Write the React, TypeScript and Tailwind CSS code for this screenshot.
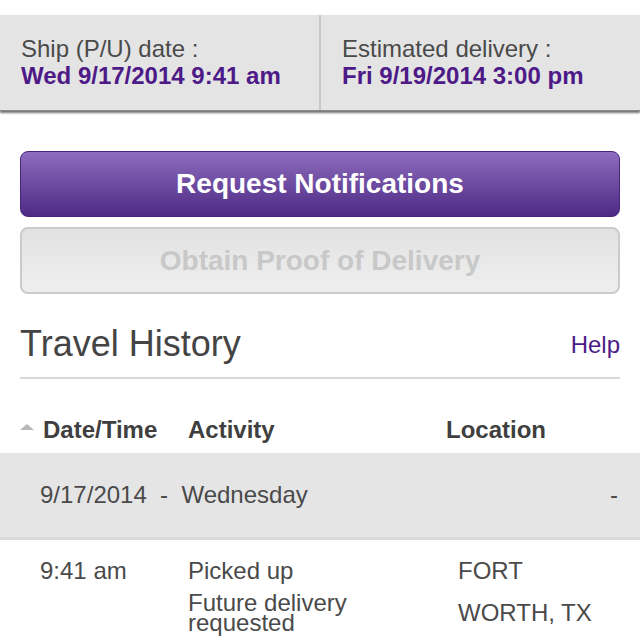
import React from "react";

export default function App() {
  return (
    <div
      className="w-[640px] h-[640px] overflow-hidden bg-white text-[#4a4a4a]"
      style={{ fontFamily: '"Liberation Sans", Arial, sans-serif' }}
    >
      <div className="h-[15px]" />
      <div className="flex h-[96px] bg-[#e4e4e4] shadow-[0_2px_2px_rgba(0,0,0,0.55)] border-b border-[#8a8a8a]">
        <div className="w-[321px] pl-[21px] pt-[20px] border-r-2 border-[#c9c9c9]">
          <div className="text-[24px] leading-[27px] text-[#4a4a4a]">Ship (P/U) date :</div>
          <div className="text-[24px] leading-[27px] font-bold text-[#4d1a87]">Wed 9/17/2014 9:41 am</div>
        </div>
        <div className="flex-1 pl-[21px] pt-[20px]">
          <div className="text-[24px] leading-[27px] text-[#4a4a4a]">Estimated delivery :</div>
          <div className="text-[24px] leading-[27px] font-bold text-[#4d1a87]">Fri 9/19/2014 3:00 pm</div>
        </div>
      </div>

      <div className="px-[20px] pt-[40px]">
        <button className="w-full h-[66px] rounded-[8px] border border-[#4a2680] bg-gradient-to-b from-[#8e6cbd] to-[#4f2a85] text-white font-bold text-[28px] flex items-center justify-center">
          Request Notifications
        </button>
        <button className="mt-[10px] w-full h-[67px] rounded-[8px] border-2 border-[#cbcbcb] bg-gradient-to-b from-[#e2e2e2] to-[#efefef] text-[#c8c8c8] font-bold text-[28px] flex items-center justify-center">
          Obtain Proof of Delivery
        </button>

        <div className="mt-[30px] flex items-start justify-between h-[55px] border-b-2 border-[#d8d8d8]">
          <div className="text-[36px] leading-[40px] text-[#444]">Travel History</div>
          <div className="text-[24px] leading-[28px] text-[#4d1a87] mt-[7px]">Help</div>
        </div>
      </div>

      <div className="flex items-start h-[74px] pt-[37px] px-[20px] text-[24px] leading-[28px] font-bold text-[#3f3f3f]">
        <div className="w-[168px] flex items-center">
          <span className="w-0 h-0 border-l-[7px] border-r-[7px] border-b-[6px] border-l-transparent border-r-transparent border-b-[#b8b8b8] mr-[9px] mt-[-6px]" />
          <span>Date/Time</span>
        </div>
        <div className="w-[258px]">Activity</div>
        <div>Location</div>
      </div>

      <div className="flex items-center justify-between h-[87px] bg-[#e5e5e5] border-b-[3px] border-[#d9d9d9] pl-[40px] pr-[22px] text-[24px] text-[#4a4a4a]">
        <div className="whitespace-pre">9/17/2014  -  Wednesday</div>
        <div>-</div>
      </div>

      <div className="flex pl-[40px] pt-[17px] text-[24px] text-[#4a4a4a]">
        <div className="w-[148px] leading-[28px]">9:41 am</div>
        <div className="w-[270px]">
          <div className="leading-[28px]">Picked up</div>
          <div className="leading-[20px] mt-[8px]">Future delivery<br />requested</div>
        </div>
        <div>
          <div className="leading-[28px]">FORT</div>
          <div className="leading-[28px] mt-[14px]">WORTH, TX</div>
        </div>
      </div>
    </div>
  );
}
